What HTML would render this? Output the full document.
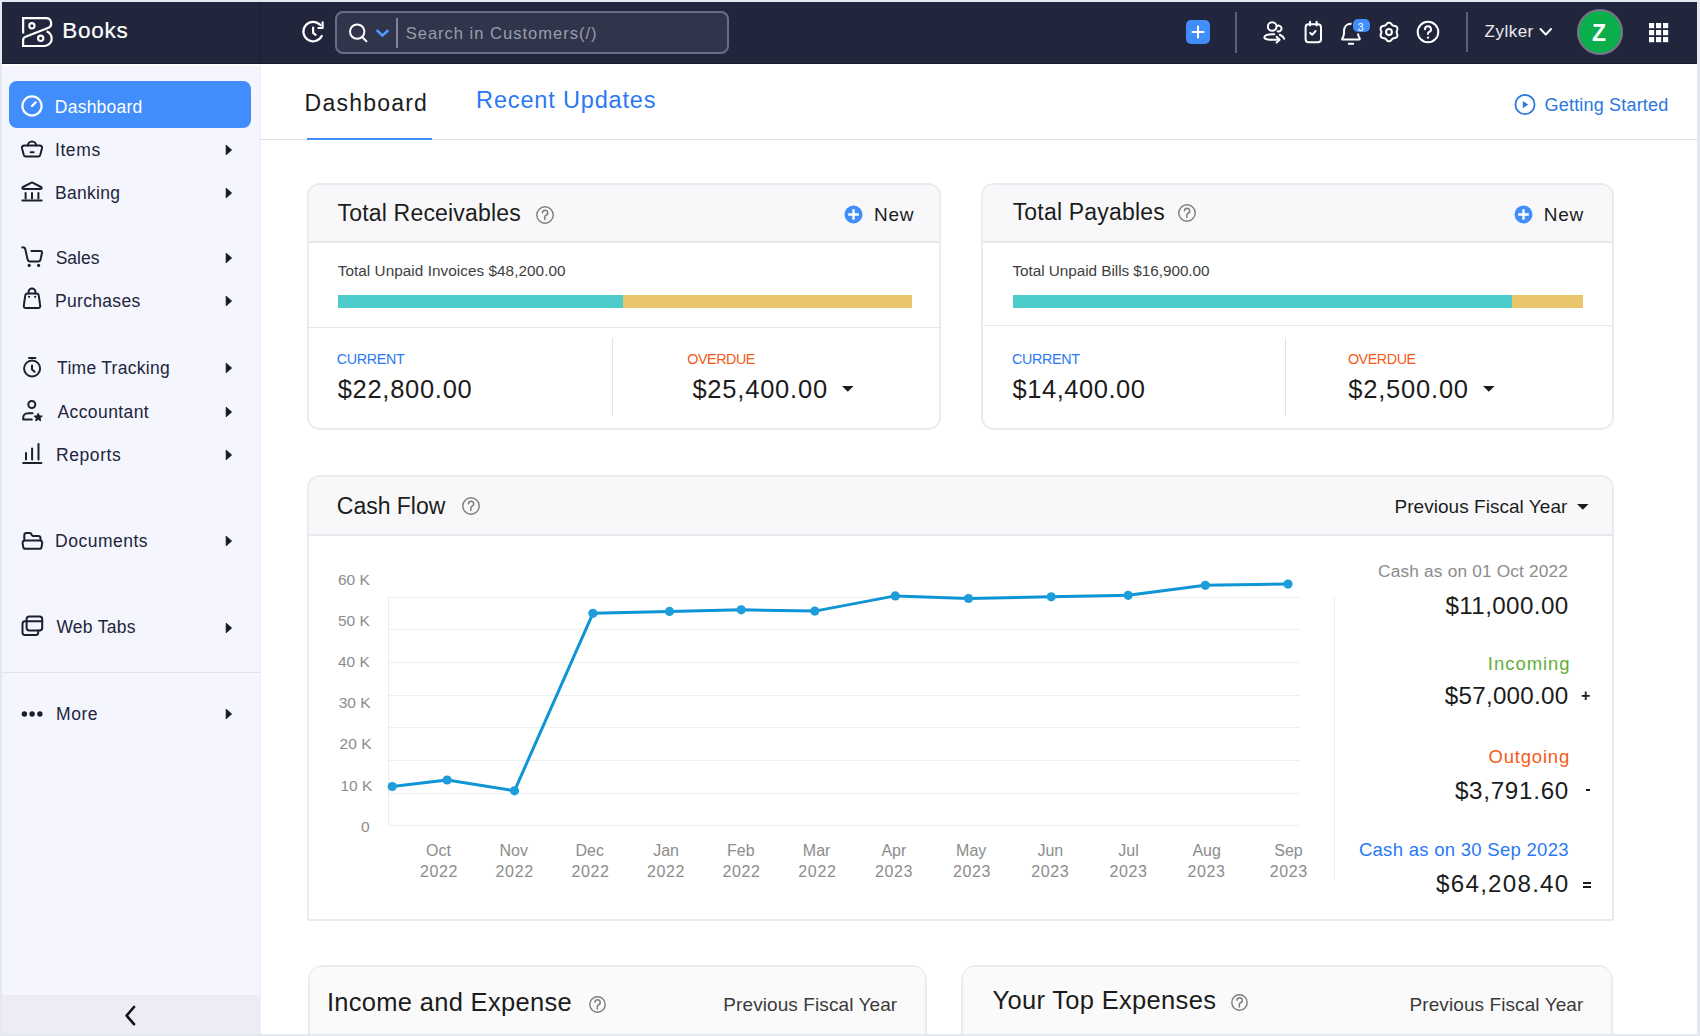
<!DOCTYPE html>
<html><head><meta charset="utf-8"><title>Zoho Books Dashboard</title>
<style>
html,body{margin:0;padding:0;}
body{width:1700px;height:1036px;position:relative;overflow:hidden;background:#e4e8f1;font-family:"Liberation Sans",sans-serif;}
.t{position:absolute;white-space:nowrap;line-height:1;}
.r{position:absolute;}
svg.r{overflow:visible;}
</style></head><body>
<div class="r" style="left:2px;top:2px;width:1695px;height:1032px;background:#fff;"></div>
<div class="r" style="left:2px;top:2px;width:1695px;height:62px;background:#21263c;"></div>
<div class="r" style="left:2px;top:63px;width:1695px;height:1px;background:#161a2b;"></div>
<div class="r" style="left:260px;top:2px;width:1px;height:62px;background:#1a1e31;"></div>
<div class="r" style="left:2px;top:64px;width:258px;height:970px;background:#f5f5fd;"></div>
<div class="r" style="left:2px;top:64px;width:258px;height:2px;background:#ffffff;"></div>
<div class="r" style="left:260px;top:64px;width:1px;height:970px;background:#ededf3;"></div>
<div class="r" style="left:2px;top:995px;width:258px;height:39px;background:#edecf6;"></div>
<div class="r" style="left:2px;top:671.5px;width:258px;height:1px;background:#e3e3ea;"></div>
<svg class="r" style="left:22px;top:17px;" width="30" height="30" viewBox="0 0 30 30" fill="none"><path d="M1.14 16.5 V1.14 H24 A5.16 5.16 0 0 1 25.9 11.1 L3.6 19.7 A3.6 3.6 0 0 0 1.14 23.1 V29 H21.7 A7.5 7.5 0 0 0 24.6 14.4" stroke="#fff" stroke-width="2.2" stroke-linejoin="miter" stroke-linecap="butt"/>
<circle cx="9.9" cy="8.8" r="2.65" stroke="#fff" stroke-width="2.1"/>
<circle cx="18.7" cy="21.3" r="2.65" stroke="#fff" stroke-width="2.1"/></svg>
<div class="t" style="left:62.20px;top:20.35px;font-size:22.5px;color:#fff;letter-spacing:0.775px;-webkit-text-stroke:0.2px #fff;">Books</div>
<svg class="r" style="left:301px;top:20px;" width="24" height="24" viewBox="0 0 24 24" fill="none"><g stroke="#fff" stroke-width="2.2" stroke-linecap="round" stroke-linejoin="round">
<path d="M20.74 16 A9.7 9.7 0 1 1 19.3 5.1"/><path d="M21.6 2.4 V8 H17.4"/><path d="M12.1 7.6 V12.8 L14.6 14.8"/></g></svg>
<div class="r" style="left:335px;top:11px;width:394px;height:43px;background:#31354c;border:2px solid #6a6e82;border-radius:8px;box-sizing:border-box;"></div>
<svg class="r" style="left:347px;top:22px;" width="22" height="22" viewBox="0 0 22 22" fill="none"><g stroke="#fff" stroke-width="2" stroke-linecap="round"><circle cx="10.2" cy="9.6" r="7.2"/><path d="M15.4 15.2 L19.4 19.2"/></g></svg>
<svg class="r" style="left:375px;top:28px;" width="15" height="10" viewBox="0 0 15 10" fill="none"><path d="M2.4 2.8 L7.5 7.6 L12.6 2.8" stroke="#4a9cff" stroke-width="2.6" stroke-linecap="round" stroke-linejoin="round"/></svg>
<div class="r" style="left:396.3px;top:18px;width:2px;height:30px;background:#80849a;"></div>
<div class="t" style="left:405.70px;top:25.33px;font-size:16.5px;color:#9a9dac;letter-spacing:1.010px;">Search in Customers(/)</div>
<div class="r" style="left:1186px;top:20px;width:23.5px;height:23.5px;background:#408dfb;border-radius:5px;"></div>
<svg class="r" style="left:1186px;top:20px;" width="24" height="24" viewBox="0 0 24 24" fill="none"><path d="M12 6.5 V17.5 M6.5 12 H17.5" stroke="#fff" stroke-width="2" stroke-linecap="round"/></svg>
<div class="r" style="left:1235px;top:12px;width:2px;height:41px;background:#5d6174;"></div>
<svg class="r" style="left:1262px;top:20px;" width="24" height="24" viewBox="0 0 24 24" fill="none"><g stroke="#fff" stroke-width="2" stroke-linecap="round" stroke-linejoin="round">
<circle cx="10.2" cy="6.5" r="4.3"/><path d="M14.9 6.2 A2.9 2.9 0 1 1 15.6 11.2"/>
<path d="M12.2 14.2 C 6 13.8 2.4 15.4 2.4 17.4 C2.4 19.4 7 20 17.2 19.8"/><path d="M14.6 16.8 L17.6 19.7 L14.6 22.6"/>
<path d="M17.8 14.8 C 19.8 15.6 21.6 17 22.2 18.8"/></g></svg>
<svg class="r" style="left:1303px;top:20px;" width="20" height="24" viewBox="0 0 20 24" fill="none"><g stroke="#fff" stroke-width="2" stroke-linecap="round" stroke-linejoin="round">
<rect x="2.6" y="4.2" width="15.4" height="18" rx="3"/><path d="M7 1.8 V5.6 M13.6 1.8 V5.6"/><path d="M7.2 13 L9.2 14.8 L12.6 11"/></g></svg>
<svg class="r" style="left:1340px;top:21px;" width="24" height="25" viewBox="0 0 24 25" fill="none"><g stroke="#fff" stroke-width="2" stroke-linecap="round" stroke-linejoin="round">
<path d="M2.4 18.4 H19.4 C 19.8 18.4 20 18 19.8 17.6 C 18.6 16 18 14.6 18 12 V10.2 C18 5.6 15 2.8 11 2.8 C 7 2.8 4 5.6 4 10.2 V12 C 4 14.6 3.4 16 2.2 17.6 C 2 18 2.1 18.4 2.4 18.4 Z"/><path d="M8.8 22.8 H13.2"/></g></svg>
<div class="r" style="left:1352.8px;top:19.2px;width:17.5px;height:12.6px;background:#408dfb;border-radius:5px;box-shadow:0 0 0 1.5px #21263c;"></div>
<div class="t" style="left:1357.80px;top:21.51px;font-size:10.5px;color:#fff;">3</div>
<svg class="r" style="left:1377.4px;top:20px;" width="24" height="24" viewBox="0 0 24 24" fill="none"><g stroke="#fff" stroke-width="2" stroke-linejoin="round"><path d="M12.00 2.70 L12.24 2.71 L12.49 2.74 L12.72 2.80 L12.96 2.88 L13.19 2.98 L13.41 3.11 L13.62 3.26 L13.82 3.42 L14.02 3.60 L14.20 3.78 L14.38 3.98 L14.54 4.17 L14.70 4.36 L14.86 4.55 L15.01 4.73 L15.16 4.89 L15.32 5.05 L15.47 5.19 L15.63 5.31 L15.80 5.42 L15.98 5.51 L16.16 5.59 L16.36 5.65 L16.57 5.71 L16.79 5.75 L17.02 5.80 L17.26 5.84 L17.51 5.88 L17.76 5.93 L18.02 5.98 L18.27 6.05 L18.52 6.13 L18.76 6.22 L18.99 6.34 L19.22 6.46 L19.42 6.61 L19.61 6.77 L19.78 6.95 L19.92 7.14 L20.05 7.35 L20.17 7.57 L20.26 7.79 L20.33 8.03 L20.38 8.27 L20.40 8.52 L20.40 8.77 L20.38 9.03 L20.34 9.29 L20.29 9.55 L20.22 9.80 L20.14 10.05 L20.05 10.29 L19.97 10.52 L19.88 10.75 L19.80 10.97 L19.74 11.19 L19.68 11.40 L19.64 11.60 L19.61 11.80 L19.60 12.00 L19.61 12.20 L19.64 12.40 L19.68 12.60 L19.74 12.81 L19.80 13.03 L19.88 13.25 L19.97 13.48 L20.05 13.71 L20.14 13.95 L20.22 14.20 L20.29 14.45 L20.34 14.71 L20.38 14.97 L20.40 15.23 L20.40 15.48 L20.38 15.73 L20.33 15.97 L20.26 16.21 L20.17 16.43 L20.05 16.65 L19.92 16.86 L19.78 17.05 L19.61 17.23 L19.42 17.39 L19.22 17.54 L18.99 17.66 L18.76 17.78 L18.52 17.87 L18.27 17.95 L18.02 18.02 L17.76 18.07 L17.51 18.12 L17.26 18.16 L17.02 18.20 L16.79 18.25 L16.57 18.29 L16.36 18.35 L16.16 18.41 L15.98 18.49 L15.80 18.58 L15.63 18.69 L15.47 18.81 L15.32 18.95 L15.16 19.11 L15.01 19.27 L14.86 19.45 L14.70 19.64 L14.54 19.83 L14.38 20.02 L14.20 20.22 L14.02 20.40 L13.82 20.58 L13.62 20.74 L13.41 20.89 L13.19 21.02 L12.96 21.12 L12.72 21.20 L12.49 21.26 L12.24 21.29 L12.00 21.30 L11.76 21.29 L11.51 21.26 L11.28 21.20 L11.04 21.12 L10.81 21.02 L10.59 20.89 L10.38 20.74 L10.18 20.58 L9.98 20.40 L9.80 20.22 L9.62 20.02 L9.46 19.83 L9.30 19.64 L9.14 19.45 L8.99 19.27 L8.84 19.11 L8.68 18.95 L8.53 18.81 L8.37 18.69 L8.20 18.58 L8.02 18.49 L7.84 18.41 L7.64 18.35 L7.43 18.29 L7.21 18.25 L6.98 18.20 L6.74 18.16 L6.49 18.12 L6.24 18.07 L5.98 18.02 L5.73 17.95 L5.48 17.87 L5.24 17.78 L5.01 17.66 L4.78 17.54 L4.58 17.39 L4.39 17.23 L4.22 17.05 L4.08 16.86 L3.95 16.65 L3.83 16.43 L3.74 16.21 L3.67 15.97 L3.62 15.73 L3.60 15.48 L3.60 15.23 L3.62 14.97 L3.66 14.71 L3.71 14.45 L3.78 14.20 L3.86 13.95 L3.95 13.71 L4.03 13.48 L4.12 13.25 L4.20 13.03 L4.26 12.81 L4.32 12.60 L4.36 12.40 L4.39 12.20 L4.40 12.00 L4.39 11.80 L4.36 11.60 L4.32 11.40 L4.26 11.19 L4.20 10.97 L4.12 10.75 L4.03 10.52 L3.95 10.29 L3.86 10.05 L3.78 9.80 L3.71 9.55 L3.66 9.29 L3.62 9.03 L3.60 8.77 L3.60 8.52 L3.62 8.27 L3.67 8.03 L3.74 7.79 L3.83 7.57 L3.95 7.35 L4.08 7.14 L4.22 6.95 L4.39 6.77 L4.58 6.61 L4.78 6.46 L5.01 6.34 L5.24 6.22 L5.48 6.13 L5.73 6.05 L5.98 5.98 L6.24 5.93 L6.49 5.88 L6.74 5.84 L6.98 5.80 L7.21 5.75 L7.43 5.71 L7.64 5.65 L7.84 5.59 L8.02 5.51 L8.20 5.42 L8.37 5.31 L8.53 5.19 L8.68 5.05 L8.84 4.89 L8.99 4.73 L9.14 4.55 L9.30 4.36 L9.46 4.17 L9.62 3.98 L9.80 3.78 L9.98 3.60 L10.18 3.42 L10.38 3.26 L10.59 3.11 L10.81 2.98 L11.04 2.88 L11.28 2.80 L11.51 2.74 L11.76 2.71 L12.00 2.70Z"/><circle cx="12" cy="12" r="2.9"/></g></svg>
<svg class="r" style="left:1416px;top:20px;" width="24" height="24" viewBox="0 0 24 24" fill="none"><g stroke="#fff" stroke-width="2" stroke-linecap="round"><circle cx="12" cy="12" r="10.3"/><path d="M9 9.3 A3 3 0 1 1 12.6 12.3 C12 12.5 12 13 12 14"/></g><circle cx="12" cy="17.6" r="1.2" fill="#fff"/></svg>
<div class="r" style="left:1465.5px;top:12px;width:2px;height:40px;background:#5d6174;"></div>
<div class="t" style="left:1484.50px;top:23.01px;font-size:17px;color:#ececf2;letter-spacing:0.500px;">Zylker</div>
<svg class="r" style="left:1539px;top:27px;" width="14" height="10" viewBox="0 0 14 10" fill="none"><path d="M1.5 2 L6.8 7.6 L12 2" stroke="#fff" stroke-width="2" stroke-linecap="round" stroke-linejoin="round"/></svg>
<div class="r" style="left:1577px;top:9px;width:46px;height:46px;background:#0aae4a;border:2.2px solid #7b7590;border-radius:50%;box-sizing:border-box;"></div>
<div class="t" style="left:1591.95px;top:21.63px;font-size:23px;color:#fff;font-weight:bold;">Z</div>
<svg class="r" style="left:1649px;top:22.6px;" width="20" height="20" viewBox="0 0 20 20" fill="none"><rect x="0" y="0" width="5.2" height="5.2" fill="#fff"/><rect x="0" y="7" width="5.2" height="5.2" fill="#fff"/><rect x="0" y="14" width="5.2" height="5.2" fill="#fff"/><rect x="7" y="0" width="5.2" height="5.2" fill="#fff"/><rect x="7" y="7" width="5.2" height="5.2" fill="#fff"/><rect x="7" y="14" width="5.2" height="5.2" fill="#fff"/><rect x="14" y="0" width="5.2" height="5.2" fill="#fff"/><rect x="14" y="7" width="5.2" height="5.2" fill="#fff"/><rect x="14" y="14" width="5.2" height="5.2" fill="#fff"/></svg>
<div class="r" style="left:9px;top:81px;width:242px;height:47px;background:#408dfb;border-radius:8px;"></div>
<svg class="r" style="left:20px;top:94px;" width="24" height="24" viewBox="0 0 24 24" fill="none"><g stroke="#fff" stroke-width="2.2" stroke-linecap="round"><circle cx="12" cy="12" r="9.6"/><path d="M12 12 L15.6 8.4"/></g></svg>
<div class="t" style="left:54.80px;top:98.58px;font-size:17.5px;color:#fff;letter-spacing:0.238px;">Dashboard</div>
<div class="t" style="left:54.90px;top:141.78px;font-size:17.5px;color:#21263c;letter-spacing:0.625px;">Items</div>
<svg class="r" style="left:224px;top:143.8px;" width="9" height="12" viewBox="0 0 9 12" fill="none"><path d="M2.2 1.2 L7.6 6 L2.2 10.8 Z" fill="#141827" stroke="#141827" stroke-width="0.9" stroke-linejoin="round"/></svg>
<div class="t" style="left:55.10px;top:185.18px;font-size:17.5px;color:#21263c;letter-spacing:0.283px;">Banking</div>
<svg class="r" style="left:224px;top:187.2px;" width="9" height="12" viewBox="0 0 9 12" fill="none"><path d="M2.2 1.2 L7.6 6 L2.2 10.8 Z" fill="#141827" stroke="#141827" stroke-width="0.9" stroke-linejoin="round"/></svg>
<div class="t" style="left:55.70px;top:249.58px;font-size:17.5px;color:#21263c;">Sales</div>
<svg class="r" style="left:224px;top:251.60000000000002px;" width="9" height="12" viewBox="0 0 9 12" fill="none"><path d="M2.2 1.2 L7.6 6 L2.2 10.8 Z" fill="#141827" stroke="#141827" stroke-width="0.9" stroke-linejoin="round"/></svg>
<div class="t" style="left:55.10px;top:292.68px;font-size:17.5px;color:#21263c;letter-spacing:0.300px;">Purchases</div>
<svg class="r" style="left:224px;top:294.7px;" width="9" height="12" viewBox="0 0 9 12" fill="none"><path d="M2.2 1.2 L7.6 6 L2.2 10.8 Z" fill="#141827" stroke="#141827" stroke-width="0.9" stroke-linejoin="round"/></svg>
<div class="t" style="left:57.10px;top:360.38px;font-size:17.5px;color:#21263c;letter-spacing:0.275px;">Time Tracking</div>
<svg class="r" style="left:224px;top:362.4px;" width="9" height="12" viewBox="0 0 9 12" fill="none"><path d="M2.2 1.2 L7.6 6 L2.2 10.8 Z" fill="#141827" stroke="#141827" stroke-width="0.9" stroke-linejoin="round"/></svg>
<div class="t" style="left:57.50px;top:403.98px;font-size:17.5px;color:#21263c;letter-spacing:0.400px;">Accountant</div>
<svg class="r" style="left:224px;top:406px;" width="9" height="12" viewBox="0 0 9 12" fill="none"><path d="M2.2 1.2 L7.6 6 L2.2 10.8 Z" fill="#141827" stroke="#141827" stroke-width="0.9" stroke-linejoin="round"/></svg>
<div class="t" style="left:56.10px;top:446.88px;font-size:17.5px;color:#21263c;letter-spacing:0.550px;">Reports</div>
<svg class="r" style="left:224px;top:448.9px;" width="9" height="12" viewBox="0 0 9 12" fill="none"><path d="M2.2 1.2 L7.6 6 L2.2 10.8 Z" fill="#141827" stroke="#141827" stroke-width="0.9" stroke-linejoin="round"/></svg>
<div class="t" style="left:55.10px;top:532.98px;font-size:17.5px;color:#21263c;letter-spacing:0.500px;">Documents</div>
<svg class="r" style="left:224px;top:535px;" width="9" height="12" viewBox="0 0 9 12" fill="none"><path d="M2.2 1.2 L7.6 6 L2.2 10.8 Z" fill="#141827" stroke="#141827" stroke-width="0.9" stroke-linejoin="round"/></svg>
<div class="t" style="left:56.40px;top:619.48px;font-size:17.5px;color:#21263c;letter-spacing:0.271px;">Web Tabs</div>
<svg class="r" style="left:224px;top:621.5px;" width="9" height="12" viewBox="0 0 9 12" fill="none"><path d="M2.2 1.2 L7.6 6 L2.2 10.8 Z" fill="#141827" stroke="#141827" stroke-width="0.9" stroke-linejoin="round"/></svg>
<div class="t" style="left:56.10px;top:705.98px;font-size:17.5px;color:#21263c;letter-spacing:0.533px;">More</div>
<svg class="r" style="left:224px;top:708px;" width="9" height="12" viewBox="0 0 9 12" fill="none"><path d="M2.2 1.2 L7.6 6 L2.2 10.8 Z" fill="#141827" stroke="#141827" stroke-width="0.9" stroke-linejoin="round"/></svg>
<svg class="r" style="left:20px;top:138px;" width="24" height="22" viewBox="0 0 24 22" fill="none"><g stroke="#1b1f30" stroke-width="2" stroke-linecap="round" stroke-linejoin="round" fill="none"><path d="M7.8 7.6 A4.2 4.2 0 0 1 16.2 7.6"/><path d="M4.4 7.6 H19.6 C21.4 7.6 22.4 8.4 22 10.2 L20.2 17 C19.9 18 19.2 18.6 18.2 18.6 H5.8 C4.8 18.6 4.1 18 3.8 17 L2 10.2 C1.6 8.4 2.6 7.6 4.4 7.6 Z"/><path d="M10.6 14.2 H13.6"/></g></svg>
<svg class="r" style="left:20px;top:181px;" width="24" height="22" viewBox="0 0 24 22" fill="none"><g stroke="#1b1f30" stroke-width="2" stroke-linecap="round" stroke-linejoin="round" fill="none"><path d="M3.6 8 H20.4 C21.8 8 22.2 6.6 21 6 L13 1.8 C12.4 1.5 11.6 1.5 11 1.8 L3 6 C1.8 6.6 2.2 8 3.6 8 Z"/><path d="M5.6 12 V17.6 M12 12 V17.6 M18.4 12 V17.6"/><path d="M2.4 19.4 H21.6"/></g></svg>
<svg class="r" style="left:20px;top:245px;" width="24" height="24" viewBox="0 0 24 24" fill="none"><g stroke="#1b1f30" stroke-width="2" stroke-linecap="round" stroke-linejoin="round" fill="none"><path d="M2.2 2.4 C4 2.2 5 2.8 5.3 4.2 L7.6 14.6 C7.9 15.8 8.6 16.4 9.8 16.4 H18.6 C19.6 16.4 20.3 15.8 20.5 14.8 L22 7.8 C22.2 6.6 21.6 5.9 20.4 5.9 H11.4"/></g><circle cx="9.2" cy="20.4" r="1.6" fill="#1b1f30"/><circle cx="18.6" cy="20.4" r="1.6" fill="#1b1f30"/></svg>
<svg class="r" style="left:20px;top:286px;" width="24" height="24" viewBox="0 0 24 24" fill="none"><g stroke="#1b1f30" stroke-width="2" stroke-linecap="round" stroke-linejoin="round" fill="none"><path d="M7.6 7.6 H16.4 C17.8 7.6 18.6 8.4 18.8 9.8 L20.2 19.6 C20.4 21 19.6 22 18.2 22 H5.8 C4.4 22 3.6 21 3.8 19.6 L5.2 9.8 C5.4 8.4 6.2 7.6 7.6 7.6 Z"/><path d="M8.6 7.6 V5.8 A3.4 3.4 0 0 1 15.4 5.8 V7.6"/></g><circle cx="9.1" cy="10.8" r="1.1" fill="#1b1f30"/><circle cx="15.1" cy="10.8" r="1.1" fill="#1b1f30"/></svg>
<svg class="r" style="left:20px;top:355px;" width="24" height="24" viewBox="0 0 24 24" fill="none"><g stroke="#1b1f30" stroke-width="2" stroke-linecap="round" stroke-linejoin="round" fill="none"><circle cx="12.1" cy="13.5" r="8"/><path d="M9 2.9 H15.4"/><path d="M12 10.6 V14.4 L14.6 16.8"/></g></svg>
<svg class="r" style="left:20px;top:399px;" width="24" height="24" viewBox="0 0 24 24" fill="none"><g stroke="#1b1f30" stroke-width="2" stroke-linecap="round" stroke-linejoin="round" fill="none"><circle cx="11.8" cy="5.5" r="3.5"/><path d="M12.6 14.2 H8.2 C5.2 14.2 3.2 16.2 3.2 18.6 V20.6 H11.8"/></g><path d="M18.2 14.1 L19.5 16.8 L22.4 17.1 L20.2 19.1 L20.8 22 L18.2 20.5 L15.6 22 L16.2 19.1 L14 17.1 L16.9 16.8 Z" fill="#1b1f30" stroke="#1b1f30" stroke-width="0.8" stroke-linejoin="round"/></svg>
<svg class="r" style="left:20px;top:442px;" width="24" height="24" viewBox="0 0 24 24" fill="none"><g stroke="#1b1f30" stroke-width="2" stroke-linecap="round" stroke-linejoin="round" fill="none"><path d="M6 11.1 V17.5 M12.1 6.5 V17.5 M18.5 1.9 V17.5"/><path d="M3.2 21 H21.4"/></g></svg>
<svg class="r" style="left:20px;top:530px;" width="24" height="22" viewBox="0 0 24 22" fill="none"><g stroke="#1b1f30" stroke-width="2" stroke-linecap="round" stroke-linejoin="round" fill="none"><path d="M4.3 10.4 V5.4 C4.3 4 5.2 3.1 6.6 3.1 H9.8 C10.4 3.1 10.9 3.4 11.2 3.9 L12 5.2 C12.3 5.7 12.8 6 13.4 6 H18.2 C19.6 6 20.5 6.9 20.5 8.3 V10.4"/><path d="M4.6 10.6 H20.2 C21.6 10.6 22.4 11.6 22.2 13 L21.6 16.8 C21.4 18 20.6 18.8 19.4 18.8 H5.4 C4.2 18.8 3.4 18 3.2 16.8 L2.6 13 C2.4 11.6 3.2 10.6 4.6 10.6 Z"/></g></svg>
<svg class="r" style="left:20px;top:613px;" width="24" height="25" viewBox="0 0 24 25" fill="none"><g stroke="#1b1f30" stroke-width="2" stroke-linecap="round" stroke-linejoin="round" fill="none"><rect x="6.6" y="3.5" width="15.6" height="13.9" rx="2.6"/><path d="M6.6 8.2 H22.2"/><path d="M6.6 8.2 H5 C3.6 8.2 2.5 9.3 2.5 10.7 V19.6 C2.5 21 3.6 22.1 5 22.1 H15.7 C17.1 22.1 18.2 21 18.2 19.6 V17.4"/></g></svg>
<svg class="r" style="left:20px;top:708px;" width="24" height="12" viewBox="0 0 24 12" fill="none"><circle cx="4.4" cy="6" r="2.7" fill="#1b1f30"/><circle cx="12.1" cy="6" r="2.7" fill="#1b1f30"/><circle cx="19.9" cy="6" r="2.7" fill="#1b1f30"/></svg>
<svg class="r" style="left:122px;top:1004px;" width="16" height="24" viewBox="0 0 16 24" fill="none"><path d="M12 3 L4.6 11.6 L12 20.2" stroke="#111" stroke-width="2.6" stroke-linecap="round" stroke-linejoin="round" fill="none"/></svg>
<div class="t" style="left:304.60px;top:91.93px;font-size:23px;color:#1c1c1c;letter-spacing:1.213px;">Dashboard</div>
<div class="t" style="left:476.10px;top:88.70px;font-size:23.5px;color:#2a78f6;letter-spacing:0.838px;">Recent Updates</div>
<div class="r" style="left:261px;top:139px;width:1436px;height:1px;background:#e1e1e4;"></div>
<div class="r" style="left:307px;top:138px;width:125px;height:2.2px;background:#408dfb;"></div>
<svg class="r" style="left:1513px;top:93px;" width="24" height="24" viewBox="0 0 24 24" fill="none"><circle cx="12" cy="11.5" r="9.6" stroke="#2b77de" stroke-width="1.8"/><path d="M9.8 8 L15.2 11.6 L9.8 15.2 Z" fill="#2b77de"/></svg>
<div class="t" style="left:1544.60px;top:95.96px;font-size:18px;color:#2b77de;letter-spacing:0.186px;">Getting Started</div>
<div class="r" style="left:307px;top:183px;width:633.5px;height:246.5px;background:#fff;border:2px solid #ebebef;border-radius:13px 13px 13px 13px;box-sizing:border-box;overflow:hidden;"></div>
<div class="r" style="left:309px;top:185px;width:629.5px;height:56.5px;background:#f8f8fa;border-radius:11px 11px 0 0;"></div>
<div class="r" style="left:309px;top:241.0px;width:629.5px;height:1.5px;background:#e8e8ec;"></div>
<div class="t" style="left:337.50px;top:202.43px;font-size:23px;color:#1c1c1c;letter-spacing:0.188px;">Total Receivables</div>
<svg class="r" style="left:535.0px;top:204.6px;" width="20" height="20" viewBox="0 0 20 20" fill="none"><circle cx="10.0" cy="10.0" r="8.2" stroke="#7d7d7d" stroke-width="1.4"/><path d="M7.5 7.8 A2.6 2.6 0 1 1 10.6 10.5 C9.8 11.0 9.8 11.6 9.8 12.4 V14.6" stroke="#7d7d7d" stroke-width="1.5" stroke-linecap="round"/></svg>
<svg class="r" style="left:843.5px;top:205.0px;" width="19" height="19" viewBox="0 0 19 19" fill="none"><circle cx="9.5" cy="9.5" r="9" fill="#408dfb"/><path d="M9.5 4.2 V14.8 M4.2 9.5 H14.8" stroke="#fff" stroke-width="2.4"/></svg>
<div class="t" style="left:874.00px;top:204.61px;font-size:19px;color:#1c1c1c;letter-spacing:0.700px;">New</div>
<div class="t" style="left:337.70px;top:263.05px;font-size:15.3px;color:#3e3e3e;letter-spacing:0.052px;">Total Unpaid Invoices $48,200.00</div>
<div class="r" style="left:338px;top:294.5px;width:285px;height:13.4px;background:#4ccbcb;"></div>
<div class="r" style="left:623px;top:294.5px;width:289px;height:13.4px;background:#e9c56b;"></div>
<div class="r" style="left:308.5px;top:327px;width:630px;height:1px;background:#e6e6ea;"></div>
<div class="r" style="left:612px;top:337.5px;width:1px;height:78.5px;background:#e3e3e7;"></div>
<div class="t" style="left:336.80px;top:351.69px;font-size:14.3px;color:#2a78f6;letter-spacing:-0.317px;">CURRENT</div>
<div class="t" style="left:337.70px;top:376.81px;font-size:25.5px;color:#1c1c1c;letter-spacing:0.711px;">$22,800.00</div>
<div class="t" style="left:687.30px;top:351.69px;font-size:14.3px;color:#f55a17;letter-spacing:-0.450px;">OVERDUE</div>
<div class="t" style="left:692.40px;top:377.01px;font-size:25.5px;color:#1c1c1c;letter-spacing:0.789px;">$25,400.00</div>
<svg class="r" style="left:841px;top:385px;" width="14" height="8" viewBox="0 0 14 8" fill="none"><path d="M1 1 H12.6 L6.8 6.8 Z" fill="#1c1c1c"/></svg>
<div class="r" style="left:980.5px;top:183px;width:633px;height:246.5px;background:#fff;border:2px solid #ebebef;border-radius:13px 13px 13px 13px;box-sizing:border-box;overflow:hidden;"></div>
<div class="r" style="left:982.5px;top:185px;width:629px;height:56.5px;background:#f8f8fa;border-radius:11px 11px 0 0;"></div>
<div class="r" style="left:982.5px;top:241.0px;width:629px;height:1.5px;background:#e8e8ec;"></div>
<div class="t" style="left:1012.70px;top:201.43px;font-size:23px;color:#1c1c1c;letter-spacing:0.185px;">Total Payables</div>
<svg class="r" style="left:1177.2px;top:203.2px;" width="20" height="20" viewBox="0 0 20 20" fill="none"><circle cx="10.0" cy="10.0" r="8.2" stroke="#7d7d7d" stroke-width="1.4"/><path d="M7.5 7.8 A2.6 2.6 0 1 1 10.6 10.5 C9.8 11.0 9.8 11.6 9.8 12.4 V14.6" stroke="#7d7d7d" stroke-width="1.5" stroke-linecap="round"/></svg>
<svg class="r" style="left:1513.5px;top:205.0px;" width="19" height="19" viewBox="0 0 19 19" fill="none"><circle cx="9.5" cy="9.5" r="9" fill="#408dfb"/><path d="M9.5 4.2 V14.8 M4.2 9.5 H14.8" stroke="#fff" stroke-width="2.4"/></svg>
<div class="t" style="left:1543.80px;top:204.61px;font-size:19px;color:#1c1c1c;letter-spacing:0.700px;">New</div>
<div class="t" style="left:1012.50px;top:262.85px;font-size:15.3px;color:#3e3e3e;letter-spacing:-0.039px;">Total Unpaid Bills $16,900.00</div>
<div class="r" style="left:1012.5px;top:294.5px;width:499.5px;height:13.4px;background:#4ccbcb;"></div>
<div class="r" style="left:1512px;top:294.5px;width:71px;height:13.4px;background:#e9c56b;"></div>
<div class="r" style="left:982.5px;top:325px;width:629.5px;height:1px;background:#e6e6ea;"></div>
<div class="r" style="left:1285px;top:337.5px;width:1px;height:78.5px;background:#e3e3e7;"></div>
<div class="t" style="left:1012.10px;top:351.69px;font-size:14.3px;color:#2a78f6;letter-spacing:-0.317px;">CURRENT</div>
<div class="t" style="left:1012.50px;top:376.81px;font-size:25.5px;color:#1c1c1c;letter-spacing:0.544px;">$14,400.00</div>
<div class="t" style="left:1347.90px;top:351.69px;font-size:14.3px;color:#f55a17;letter-spacing:-0.417px;">OVERDUE</div>
<div class="t" style="left:1348.30px;top:377.01px;font-size:25.5px;color:#1c1c1c;letter-spacing:0.787px;">$2,500.00</div>
<svg class="r" style="left:1481.5px;top:385px;" width="14" height="8" viewBox="0 0 14 8" fill="none"><path d="M1 1 H12.6 L6.8 6.8 Z" fill="#1c1c1c"/></svg>
<div class="r" style="left:307px;top:475px;width:1306.5px;height:445.5px;background:#fff;border:2px solid #ebebef;border-radius:13px 13px 0px 0px;box-sizing:border-box;overflow:hidden;"></div>
<div class="r" style="left:309px;top:477px;width:1302.5px;height:57.5px;background:#f8f8fa;border-radius:11px 11px 0 0;"></div>
<div class="r" style="left:309px;top:534.0px;width:1302.5px;height:1.5px;background:#e8e8ec;"></div>
<div class="t" style="left:336.80px;top:495.03px;font-size:23px;color:#1c1c1c;letter-spacing:-0.012px;">Cash Flow</div>
<svg class="r" style="left:461.2px;top:496.3px;" width="20" height="20" viewBox="0 0 20 20" fill="none"><circle cx="10.0" cy="10.0" r="8.2" stroke="#7d7d7d" stroke-width="1.4"/><path d="M7.5 7.8 A2.6 2.6 0 1 1 10.6 10.5 C9.8 11.0 9.8 11.6 9.8 12.4 V14.6" stroke="#7d7d7d" stroke-width="1.5" stroke-linecap="round"/></svg>
<div class="t" style="left:1394.50px;top:496.91px;font-size:19px;color:#1c1c1c;letter-spacing:0.037px;">Previous Fiscal Year</div>
<svg class="r" style="left:1576px;top:503px;" width="14" height="8" viewBox="0 0 14 8" fill="none"><path d="M1 1 H12.6 L6.8 6.8 Z" fill="#1c1c1c"/></svg>
<div class="r" style="left:388px;top:596.6px;width:912px;height:1px;background:#efefef;"></div>
<div class="r" style="left:388px;top:629.0px;width:912px;height:1px;background:#efefef;"></div>
<div class="r" style="left:388px;top:662.0px;width:912px;height:1px;background:#efefef;"></div>
<div class="r" style="left:388px;top:694.8px;width:912px;height:1px;background:#efefef;"></div>
<div class="r" style="left:388px;top:727.2px;width:912px;height:1px;background:#efefef;"></div>
<div class="r" style="left:388px;top:760.3px;width:912px;height:1px;background:#efefef;"></div>
<div class="r" style="left:388px;top:792.7px;width:912px;height:1px;background:#efefef;"></div>
<div class="r" style="left:388px;top:825.2px;width:912px;height:1px;background:#efefef;"></div>
<div class="r" style="left:387.6px;top:597px;width:1px;height:229px;background:#ececec;"></div>
<div class="t" style="left:337.90px;top:572.28px;font-size:15.5px;color:#8c8c8c;">60 K</div>
<div class="t" style="left:337.90px;top:613.18px;font-size:15.5px;color:#8c8c8c;">50 K</div>
<div class="t" style="left:337.90px;top:654.18px;font-size:15.5px;color:#8c8c8c;">40 K</div>
<div class="t" style="left:338.70px;top:695.18px;font-size:15.5px;color:#8c8c8c;">30 K</div>
<div class="t" style="left:339.60px;top:736.18px;font-size:15.5px;color:#8c8c8c;">20 K</div>
<div class="t" style="left:340.40px;top:777.58px;font-size:15.5px;color:#8c8c8c;">10 K</div>
<div class="t" style="left:361.00px;top:818.78px;font-size:15.5px;color:#8c8c8c;">0</div>
<div class="t" style="left:426.00px;top:842.65px;font-size:16px;color:#8c8c8c;">Oct</div>
<div class="t" style="left:419.90px;top:864.25px;font-size:16px;color:#8c8c8c;letter-spacing:0.667px;">2022</div>
<div class="t" style="left:499.45px;top:842.65px;font-size:16px;color:#8c8c8c;">Nov</div>
<div class="t" style="left:495.50px;top:864.25px;font-size:16px;color:#8c8c8c;letter-spacing:0.667px;">2022</div>
<div class="t" style="left:575.50px;top:842.65px;font-size:16px;color:#8c8c8c;">Dec</div>
<div class="t" style="left:571.40px;top:864.25px;font-size:16px;color:#8c8c8c;letter-spacing:0.667px;">2022</div>
<div class="t" style="left:653.15px;top:842.65px;font-size:16px;color:#8c8c8c;">Jan</div>
<div class="t" style="left:646.90px;top:864.25px;font-size:16px;color:#8c8c8c;letter-spacing:0.667px;">2022</div>
<div class="t" style="left:727.10px;top:842.65px;font-size:16px;color:#8c8c8c;">Feb</div>
<div class="t" style="left:722.40px;top:864.25px;font-size:16px;color:#8c8c8c;letter-spacing:0.667px;">2022</div>
<div class="t" style="left:802.80px;top:842.65px;font-size:16px;color:#8c8c8c;">Mar</div>
<div class="t" style="left:798.30px;top:864.25px;font-size:16px;color:#8c8c8c;letter-spacing:0.667px;">2022</div>
<div class="t" style="left:881.45px;top:842.65px;font-size:16px;color:#8c8c8c;">Apr</div>
<div class="t" style="left:875.00px;top:864.25px;font-size:16px;color:#8c8c8c;letter-spacing:0.633px;">2023</div>
<div class="t" style="left:956.05px;top:842.65px;font-size:16px;color:#8c8c8c;">May</div>
<div class="t" style="left:953.00px;top:864.25px;font-size:16px;color:#8c8c8c;letter-spacing:0.633px;">2023</div>
<div class="t" style="left:1037.45px;top:842.65px;font-size:16px;color:#8c8c8c;">Jun</div>
<div class="t" style="left:1031.20px;top:864.25px;font-size:16px;color:#8c8c8c;letter-spacing:0.633px;">2023</div>
<div class="t" style="left:1118.35px;top:842.65px;font-size:16px;color:#8c8c8c;">Jul</div>
<div class="t" style="left:1109.40px;top:864.25px;font-size:16px;color:#8c8c8c;letter-spacing:0.633px;">2023</div>
<div class="t" style="left:1192.45px;top:842.65px;font-size:16px;color:#8c8c8c;">Aug</div>
<div class="t" style="left:1187.40px;top:864.25px;font-size:16px;color:#8c8c8c;letter-spacing:0.633px;">2023</div>
<div class="t" style="left:1274.25px;top:842.65px;font-size:16px;color:#8c8c8c;">Sep</div>
<div class="t" style="left:1269.70px;top:864.25px;font-size:16px;color:#8c8c8c;letter-spacing:0.633px;">2023</div>
<svg class="r" style="left:300px;top:560px;" width="1020" height="260" viewBox="0 0 1020 260" fill="none"><polyline points="92.19999999999999,226.5 147.10000000000002,220 214.5,230.79999999999995 292.9,53.299999999999955 369.5,51.39999999999998 441.20000000000005,49.799999999999955 514.8,51.10000000000002 595.3,35.89999999999998 668.5,38.5 751.2,36.799999999999955 828.2,35.299999999999955 905.3,25.299999999999955 988,24.100000000000023" stroke="#0e95d6" stroke-width="3" fill="none" stroke-linejoin="round"/><circle cx="92.19999999999999" cy="226.5" r="4.6" fill="#1d9dda"/><circle cx="147.10000000000002" cy="220" r="4.6" fill="#1d9dda"/><circle cx="214.5" cy="230.79999999999995" r="4.6" fill="#1d9dda"/><circle cx="292.9" cy="53.299999999999955" r="4.6" fill="#1d9dda"/><circle cx="369.5" cy="51.39999999999998" r="4.6" fill="#1d9dda"/><circle cx="441.20000000000005" cy="49.799999999999955" r="4.6" fill="#1d9dda"/><circle cx="514.8" cy="51.10000000000002" r="4.6" fill="#1d9dda"/><circle cx="595.3" cy="35.89999999999998" r="4.6" fill="#1d9dda"/><circle cx="668.5" cy="38.5" r="4.6" fill="#1d9dda"/><circle cx="751.2" cy="36.799999999999955" r="4.6" fill="#1d9dda"/><circle cx="828.2" cy="35.299999999999955" r="4.6" fill="#1d9dda"/><circle cx="905.3" cy="25.299999999999955" r="4.6" fill="#1d9dda"/><circle cx="988" cy="24.100000000000023" r="4.6" fill="#1d9dda"/></svg>
<div class="r" style="left:1333.6px;top:596.5px;width:1.2px;height:283.5px;background:#efefef;"></div>
<div class="t" style="left:1378.10px;top:562.75px;font-size:17.3px;color:#8c8c8c;letter-spacing:0.167px;">Cash as on 01 Oct 2022</div>
<div class="t" style="left:1445.40px;top:594.31px;font-size:24.2px;color:#1c1c1c;letter-spacing:0.400px;">$11,000.00</div>
<div class="t" style="left:1487.80px;top:655.14px;font-size:18.5px;color:#62ae37;letter-spacing:0.971px;">Incoming</div>
<div class="t" style="left:1444.70px;top:683.81px;font-size:24.2px;color:#1c1c1c;letter-spacing:0.278px;">$57,000.00</div>
<div class="t" style="left:1580.90px;top:687.75px;font-size:16px;color:#1c1c1c;font-weight:bold;">+</div>
<div class="t" style="left:1488.60px;top:748.44px;font-size:18.5px;color:#f55a17;letter-spacing:0.786px;">Outgoing</div>
<div class="t" style="left:1454.90px;top:778.81px;font-size:24.2px;color:#1c1c1c;letter-spacing:0.725px;">$3,791.60</div>
<div class="r" style="left:1585.6px;top:789px;width:4.6px;height:2px;background:#1c1c1c;"></div>
<div class="t" style="left:1358.90px;top:841.14px;font-size:18.5px;color:#2a78f6;letter-spacing:0.286px;">Cash as on 30 Sep 2023</div>
<div class="t" style="left:1436.10px;top:872.31px;font-size:24.2px;color:#1c1c1c;letter-spacing:1.233px;">$64,208.40</div>
<div class="r" style="left:1583px;top:881.8px;width:8.4px;height:1.8px;background:#1c1c1c;"></div>
<div class="r" style="left:1583px;top:886.2px;width:8.4px;height:1.8px;background:#1c1c1c;"></div>
<div class="r" style="left:308px;top:965px;width:619px;height:90px;background:#fff;border:2px solid #ebebef;border-radius:15px 15px 15px 15px;box-sizing:border-box;overflow:hidden;"></div>
<div class="r" style="left:310px;top:967px;width:615px;height:87px;background:#fafafa;border-radius:11px 11px 0 0;"></div>
<div class="t" style="left:326.90px;top:989.61px;font-size:25.5px;color:#1c1c1c;letter-spacing:0.306px;">Income and Expense</div>
<svg class="r" style="left:587.5px;top:995.2px;" width="19" height="19" viewBox="0 0 19 19" fill="none"><circle cx="9.5" cy="9.5" r="7.7" stroke="#7d7d7d" stroke-width="1.4"/><path d="M7.0 7.3 A2.6 2.6 0 1 1 10.1 10.0 C9.3 10.5 9.3 11.1 9.3 11.9 V14.1" stroke="#7d7d7d" stroke-width="1.5" stroke-linecap="round"/></svg>
<div class="t" style="left:723.30px;top:995.41px;font-size:19px;color:#3a3a3a;letter-spacing:0.089px;">Previous Fiscal Year</div>
<div class="r" style="left:961px;top:965px;width:652px;height:90px;background:#fff;border:2px solid #ebebef;border-radius:15px 15px 15px 15px;box-sizing:border-box;overflow:hidden;"></div>
<div class="r" style="left:963px;top:967px;width:648px;height:87px;background:#fafafa;border-radius:11px 11px 0 0;"></div>
<div class="t" style="left:992.40px;top:987.71px;font-size:25.5px;color:#1c1c1c;letter-spacing:0.325px;">Your Top Expenses</div>
<svg class="r" style="left:1229.5px;top:993.3px;" width="19" height="19" viewBox="0 0 19 19" fill="none"><circle cx="9.5" cy="9.5" r="7.7" stroke="#7d7d7d" stroke-width="1.4"/><path d="M7.0 7.3 A2.6 2.6 0 1 1 10.1 10.0 C9.3 10.5 9.3 11.1 9.3 11.9 V14.1" stroke="#7d7d7d" stroke-width="1.5" stroke-linecap="round"/></svg>
<div class="t" style="left:1409.50px;top:994.51px;font-size:19px;color:#3a3a3a;letter-spacing:0.089px;">Previous Fiscal Year</div>
<div class="r" style="left:0px;top:1034px;width:1700px;height:2px;background:#e4e8f1;"></div>
<div class="r" style="left:1697px;top:0px;width:3px;height:1036px;background:#e4e8f1;"></div>
</body></html>
